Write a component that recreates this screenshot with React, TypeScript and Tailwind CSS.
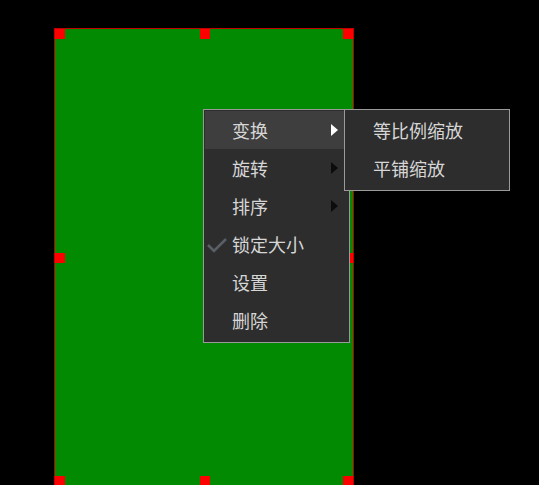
import { Fragment } from "react";

const items = [
  { label: "变换", sub: true, active: true },
  { label: "旋转", sub: true },
  { label: "排序", sub: true },
  { label: "锁定大小", checked: true },
  { label: "设置" },
  { label: "删除" },
];

const subItems = ["等比例缩放", "平铺缩放"];

function Arrow({ light }: { light?: boolean }) {
  return (
    <svg width="7" height="12" viewBox="0 0 7 12" className="absolute right-[10px] top-[13px]">
      <path d="M0 0 L7 6 L0 12 Z" fill={light ? "#ffffff" : "#0c0c0c"} />
    </svg>
  );
}

function Check() {
  return (
    <svg width="22" height="16" viewBox="0 0 22 16" className="absolute left-[1px] top-[12px]">
      <path d="M2 8 L8 14 L20 2" stroke="#5a5f66" strokeWidth="2.6" fill="none" />
    </svg>
  );
}

export default function App() {
  const handles = [
    "left-0 top-0",
    "left-[145px] top-0",
    "right-0 top-0",
    "left-0 top-[224px]",
    "right-0 top-[224px]",
    "left-0 bottom-0",
    "left-[145px] bottom-0",
    "right-0 bottom-0",
  ];

  return (
    <div
      className="relative w-[539px] h-[485px] overflow-hidden bg-black"
      style={{ fontFamily: '"Noto Sans CJK SC", "Noto Sans", sans-serif' }}
    >
      {/* canvas object */}
      <div className="absolute left-[54px] top-[28px] w-[300px] h-[459px] border border-[#c00000] bg-[#038a03]">
        {handles.map((h) => (
          <div key={h} className={`absolute ${h} w-[10px] h-[10px] bg-[#ff0000]`} />
        ))}
      </div>

      {/* context menu */}
      <div className="absolute left-[203px] top-[109px] w-[147px] border border-[#9a9a9a] bg-[#2d2d2d] pt-[1px] pb-[3px]">
        {items.map((it) => (
          <Fragment key={it.label}>
            <div
              className={`relative h-[38px] mx-[1px] flex items-center pl-[27px] text-[18px] text-[#d6d6d6] ${
                it.active ? "bg-[#3e3e3e]" : ""
              }`}
            >
              {it.checked && <Check />}
              <span className="leading-none">{it.label}</span>
              {it.sub && <Arrow light={it.active} />}
            </div>
          </Fragment>
        ))}
      </div>

      {/* submenu */}
      <div className="absolute left-[344px] top-[109px] w-[166px] border border-[#9a9a9a] bg-[#2d2d2d] pt-[1px] pb-[3px]">
        {subItems.map((s) => (
          <div key={s} className="h-[38px] flex items-center pl-[28px] text-[18px] text-[#d6d6d6]">
            <span className="leading-none">{s}</span>
          </div>
        ))}
      </div>
    </div>
  );
}
